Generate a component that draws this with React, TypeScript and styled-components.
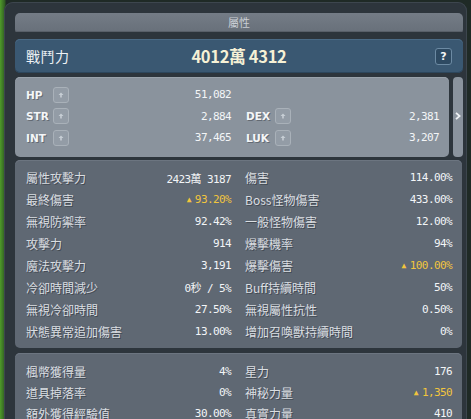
import styled, { createGlobalStyle } from 'styled-components';

const GlobalStyle = createGlobalStyle`
  html, body {
    margin: 0;
    padding: 0;
    width: 471px;
    height: 419px;
    overflow: hidden;
    background: linear-gradient(90deg, #4f9a2a 0px, #2f5a22 5px, #1f2a26 6px, #1f2a26 100%);
  }
  * { box-sizing: border-box; }
`;

interface Stat {
  label: string;
  value: string;
  up?: boolean;
}

const baseStats: [Stat | null, Stat | null][] = [
  [{ label: 'HP', value: '51,082' }, null],
  [{ label: 'STR', value: '2,884' }, { label: 'DEX', value: '2,381' }],
  [{ label: 'INT', value: '37,465' }, { label: 'LUK', value: '3,207' }],
];

const battleStats: [Stat, Stat][] = [
  [{ label: '屬性攻擊力', value: '2423萬 3187' }, { label: '傷害', value: '114.00%' }],
  [{ label: '最終傷害', value: '93.20%', up: true }, { label: 'Boss怪物傷害', value: '433.00%' }],
  [{ label: '無視防禦率', value: '92.42%' }, { label: '一般怪物傷害', value: '12.00%' }],
  [{ label: '攻擊力', value: '914' }, { label: '爆擊機率', value: '94%' }],
  [{ label: '魔法攻擊力', value: '3,191' }, { label: '爆擊傷害', value: '100.00%', up: true }],
  [{ label: '冷卻時間減少', value: '0秒 / 5%' }, { label: 'Buff持續時間', value: '50%' }],
  [{ label: '無視冷卻時間', value: '27.50%' }, { label: '無視屬性抗性', value: '0.50%' }],
  [{ label: '狀態異常追加傷害', value: '13.00%' }, { label: '增加召喚獸持續時間', value: '0%' }],
];

const extraStats: [Stat, Stat][] = [
  [{ label: '楓幣獲得量', value: '4%' }, { label: '星力', value: '176' }],
  [{ label: '道具掉落率', value: '0%' }, { label: '神秘力量', value: '1,350', up: true }],
  [{ label: '額外獲得經驗值', value: '30.00%' }, { label: '真實力量', value: '410' }],
];

const UpArrowButton = () => (
  <UpButton>
    <svg width="6" height="6" viewBox="0 0 6 6">
      <path d="M3 0.5 L5.5 3 L3.8 3 L3.8 5.5 L2.2 5.5 L2.2 3 L0.5 3 Z" fill="#c7ced5" />
    </svg>
  </UpButton>
);

const StatCell = ({ stat }: { stat: Stat }) => (
  <Cell>
    <Label>{stat.label}</Label>
    <Value $up={stat.up}>
      {stat.up && <UpMark>▲</UpMark>}
      {stat.value}
    </Value>
  </Cell>
);

const BaseCell = ({ stat, wide }: { stat: Stat | null; wide?: boolean }) => (
  <Cell>
    {stat && (
      <>
        <BaseLabel $wide={wide}>{stat.label}</BaseLabel>
        <UpArrowButton />
        <Value>{stat.value}</Value>
      </>
    )}
  </Cell>
);

export default function App() {
  return (
    <>
      <GlobalStyle />
      <Window>
        <TitleBar>屬性</TitleBar>
        <PowerBar>
          <PowerLabel>戰鬥力</PowerLabel>
          <PowerValue>4012萬 4312</PowerValue>
          <HelpButton>?</HelpButton>
        </PowerBar>
        <BaseRow>
          <BasePanel>
            {baseStats.map(([l, r], i) => (
              <BaseGridRow key={i}>
                <BaseCell stat={l} />
                <BaseCell stat={r} wide />
              </BaseGridRow>
            ))}
          </BasePanel>
          <SideTab>
            <svg width="6" height="8" viewBox="0 0 6 8">
              <path d="M1 0.8 L4.6 4 L1 7.2" stroke="#eef1f4" strokeWidth="1.8" fill="none" />
            </svg>
          </SideTab>
        </BaseRow>
        <StatPanel>
          {battleStats.map(([l, r], i) => (
            <StatRow key={i}>
              <StatCell stat={l} />
              <StatCell stat={r} />
            </StatRow>
          ))}
        </StatPanel>
        <StatPanel $extra>
          {extraStats.map(([l, r], i) => (
            <StatRow key={i} $compact>
              <StatCell stat={l} />
              <StatCell stat={r} />
            </StatRow>
          ))}
        </StatPanel>
      </Window>
    </>
  );
}

const Window = styled.div`
  margin: 2px 4px 0 4px;
  height: 440px;
  padding: 11px 4px 0 11px;
  background: #2d353c;
  border-radius: 9px 9px 0 0;
  box-shadow: inset 0 0 0 1px #3d464e;
  display: flex;
  flex-direction: column;
`;

const TitleBar = styled.div`
  height: 19px;
  margin-bottom: 7px;
  border-radius: 5px 5px 2px 2px;
  background: linear-gradient(#747c86, #68707a);
  box-shadow: inset 0 -1px 0 #596069;
  color: #c9ced4;
  font-family: 'Noto Sans CJK TC', sans-serif;
  font-size: 11px;
  line-height: 19px;
  text-align: center;
`;

const PowerBar = styled.div`
  height: 34px;
  margin-bottom: 4px;
  border-radius: 5px;
  background: #3a5872;
  box-shadow: inset 0 1px 0 #4a6a85, inset 0 -1px 0 #2c465c;
  display: flex;
  align-items: center;
  padding: 0 11px;
  position: relative;
`;

const PowerLabel = styled.div`
  color: #eef2f5;
  font-family: 'Noto Sans CJK TC', sans-serif;
  font-size: 14px;
  letter-spacing: 0.5px;
`;

const PowerValue = styled.div`
  position: absolute;
  left: 0;
  right: 0;
  text-align: center;
  color: #f6f1d6;
  font-family: 'Noto Sans CJK TC', sans-serif;
  font-weight: 700;
  font-size: 16.5px;
  letter-spacing: -0.3px;
  pointer-events: none;
`;

const HelpButton = styled.div`
  margin-left: auto;
  width: 17px;
  height: 17px;
  border-radius: 3px;
  background: #2e4a62;
  border: 1px solid #6c8aa3;
  color: #f2f4f6;
  font-family: 'DejaVu Sans', sans-serif;
  font-weight: 700;
  font-size: 11px;
  line-height: 15px;
  text-align: center;
`;

const BaseRow = styled.div`
  display: flex;
  gap: 4px;
  height: 80px;
  margin-bottom: 3px;
`;

const BasePanel = styled.div`
  width: 434px;
  border-radius: 5px;
  background: #8a939d;
  box-shadow: inset 0 1px 0 #99a2ab;
  padding: 7px 10px 0 11px;
`;

const BaseGridRow = styled.div`
  display: grid;
  grid-template-columns: 205px 193px;
  column-gap: 15px;
  height: 21.5px;
`;

const SideTab = styled.div`
  width: 10px;
  border-radius: 4px;
  background: #8a939d;
  display: flex;
  align-items: center;
  justify-content: center;
  padding-bottom: 2px;
`;

const Cell = styled.div`
  display: flex;
  align-items: center;
  min-width: 0;
`;

const BaseLabel = styled.div<{ $wide?: boolean }>`
  width: ${(p) => (p.$wide ? '29px' : '27px')};
  color: #f4f6f8;
  font-family: 'DejaVu Sans', sans-serif;
  font-weight: 700;
  font-size: 10.5px;
  text-shadow: 1px 1px 0 rgba(60, 66, 74, 0.5);
`;

const UpButton = styled.div`
  width: 16px;
  height: 16px;
  border-radius: 3px;
  background: #939ca6;
  border: 1px solid #a9b1b9;
  display: flex;
  align-items: center;
  justify-content: center;
`;

const StatPanel = styled.div<{ $extra?: boolean }>`
  width: 447px;
  border-radius: 5px;
  background: #5f6873;
  box-shadow: inset 0 1px 0 #6c7580;
  padding: ${(p) => (p.$extra ? '8px' : '7px')} 10px 6px 11px;
  margin-bottom: 5px;
  flex-shrink: 0;
`;

const StatRow = styled.div<{ $compact?: boolean }>`
  display: grid;
  grid-template-columns: 205px 207px;
  column-gap: 14px;
  height: ${(p) => (p.$compact ? '21px' : '21.9px')};
`;

const Label = styled.div`
  color: #dadee2;
  font-family: 'Noto Sans CJK TC', sans-serif;
  font-size: 12px;
  text-shadow: 1px 1px 0 rgba(30, 35, 40, 0.45);
  white-space: nowrap;
`;

const Value = styled.div<{ $up?: boolean }>`
  margin-left: auto;
  color: ${(p) => (p.$up ? '#f2c53d' : '#f3f5f7')};
  font-family: 'DejaVu Sans Mono', 'Noto Sans CJK TC', monospace;
  font-size: 11px;
  letter-spacing: -0.6px;
  white-space: nowrap;
  display: flex;
  align-items: center;
`;

const UpMark = styled.span`
  font-size: 8px;
  margin-right: 4px;
  color: #f2c53d;
`;
